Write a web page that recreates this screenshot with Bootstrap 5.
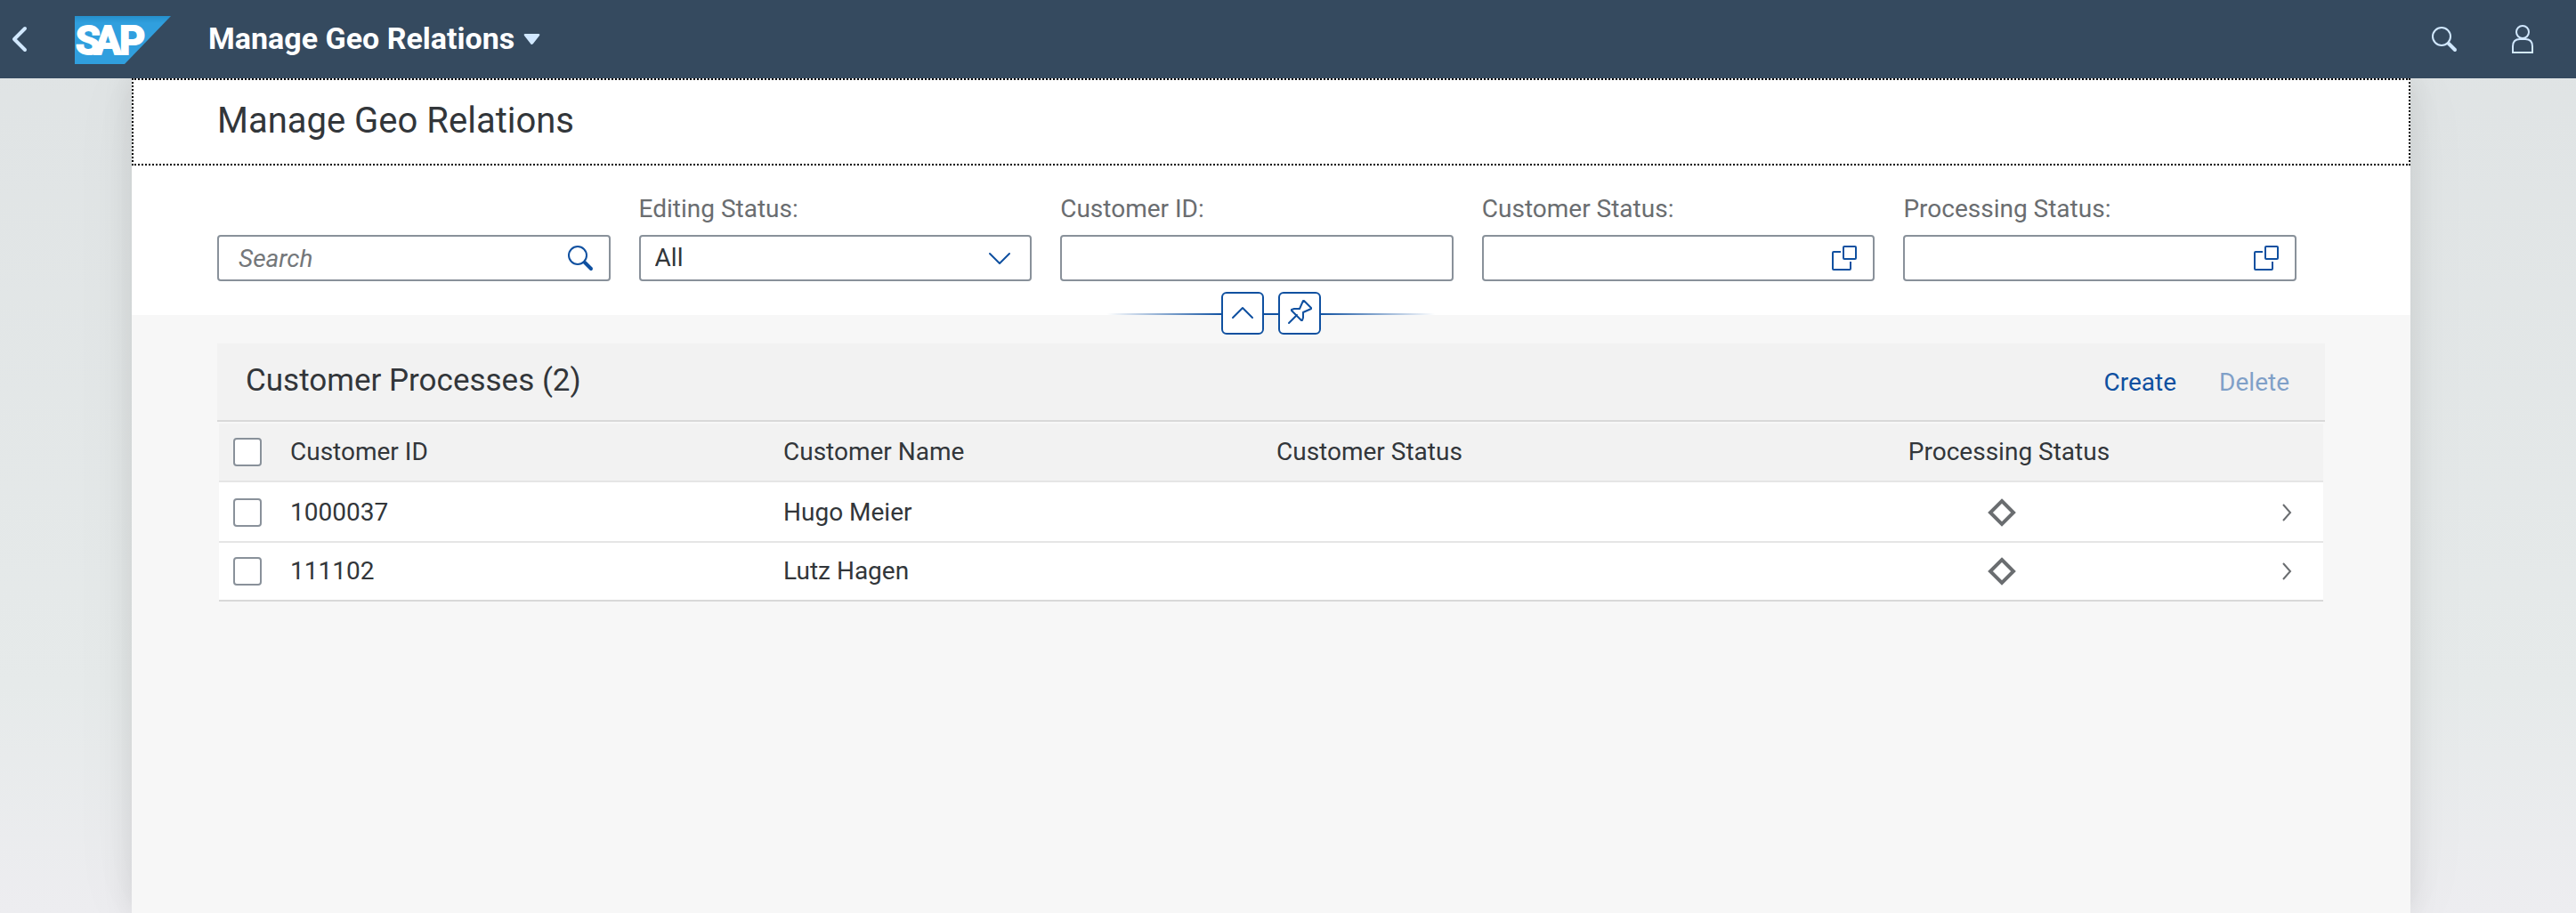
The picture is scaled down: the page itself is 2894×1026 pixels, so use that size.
<!DOCTYPE html>
<html lang="en">
<head>
<meta charset="utf-8">
<meta name="viewport" content="width=device-width, initial-scale=1">
<title>Manage Geo Relations</title>
<link href="https://cdn.jsdelivr.net/npm/bootstrap@5.3.0/dist/css/bootstrap.min.css" rel="stylesheet">
<style>
  :root { --brand: #0f50a0; --shell: #354a5f; --ink: #32363a; --muted-ink: #6a6d70; --field: #89919a; }
  body { font-family: Roboto, "Open Sans", sans-serif; font-size: 28px; line-height: 38px; color: var(--ink);
    background: linear-gradient(#dfe3e4, #e6eaea 75%, #ededf0) fixed; }
  svg { display: block; fill: none; flex-shrink: 0; }
  .shell-bar { background: var(--shell); height: 88px; color: #d1e8ff; position: relative; z-index: 2; padding: 0 44px 0 8px; }
  .shell-btn { border: 0; background: none; color: #d1e8ff; padding: 0; }
  .shell-logo { padding-top: 2px; }
  .shell-menu { margin-left: 40px; }
  .shell-title { font-size: 34px; font-weight: 700; color: #fff; line-height: 40px; padding-bottom: 2px; }
  .shell-tools { gap: 56px; }
  .page-area { padding-right: 38px; }
  .page { max-width: 2560px; background: #f7f7f7; box-shadow: 0 0 80px rgba(0,0,0,.04), 0 0 32px rgba(0,0,0,.1); }
  .page-head { border: 2px dotted #000; background: #fff; padding: 22px 94px 24px; }
  .page-title { font-size: 40px; line-height: 48px; font-weight: 400; margin: 0; }
  .filters { background: #fff; padding: 30px 96px 38px; }
  .filter-row { margin: 0; }
  .filter-row > .col { padding: 0 32px 0 0; }
  .filter-label { display: block; color: var(--muted-ink); margin-bottom: 10px; }
  .field-box { border: 2px solid var(--field); border-radius: 4px; height: 52px; background: #fff; overflow: hidden; color: var(--brand); }
  .field-box input, .field-box select { flex: 1 1 0; border: 0; background: transparent; color: var(--ink); outline: 0; padding: 0 16px; min-width: 0; height: 48px; appearance: none; }
  .field-box select { padding-right: 50px; margin-right: -50px; }
  .field-box input[type=search] { padding-left: 22px; }
  .field-box input::placeholder { color: #74777a; font-style: italic; opacity: 1; }
  .field-icon { border: 0; background: none; padding: 0 16px 0 0; color: var(--brand); }
  .pinline { height: 48px; margin: -26px auto -22px; width: 368px; position: relative;
    background: linear-gradient(90deg, transparent, var(--brand) 35%, var(--brand) 65%, transparent) center 24px / 100% 2px no-repeat; }
  .pin-btn { width: 48px; height: 48px; border: 2px solid var(--brand); border-radius: 6px; background: #fff; color: var(--brand); padding: 0; }
  .content { padding: 32px 96px 0; }
  .table-bar { background: #f2f2f2; border-bottom: 2px solid #d9d9d9; height: 88px; padding: 0 20px 0 32px; margin-bottom: 2px; }
  .table-title { font-size: 35px; line-height: 44px; font-weight: 400; margin: 0; padding-bottom: 2px; }
  .bar-btn { border: 0; background: none; color: var(--brand); padding: 2px 20px 0; }
  .bar-btn:disabled { opacity: .5; color: var(--brand); }
  .data-table { table-layout: fixed; width: 100%; border-collapse: separate; border-spacing: 0; }
  .data-wrap { padding: 0 2px; }
  .data-table th, .data-table td { padding: 0 16px; height: 66px; font-weight: 400; border-bottom: 2px solid #e5e5e5; vertical-align: middle; }
  .data-table thead th { background: #f2f2f2; }
  .data-table th.col-status { padding-left: 32px; }
  .data-table tbody tr:first-child td { height: 68px; padding-top: 2px; }
  .data-table tbody td { background: #fff; }
  .data-table tbody tr:last-child td { border-bottom-color: #d9d9d9; }
  .data-table .col-pick { width: 64px; }
  .data-table .col-go { width: 84px; }
  .pick { appearance: none; display: block; width: 32px; height: 32px; border: 2px solid var(--field); border-radius: 4px; background: #fff; margin: 0; }
</style>
<script src="https://cdn.jsdelivr.net/npm/bootstrap@5.3.0/dist/js/bootstrap.bundle.min.js"></script>
</head>
<body class="min-vh-100 d-flex flex-column">
<svg width="0" height="0" class="d-none" aria-hidden="true">
  <symbol id="i-search" viewBox="0 0 32 32"><g fill="none" stroke="currentColor"><circle cx="13" cy="13" r="10" stroke-width="2"/><path stroke-width="4" stroke-linecap="round" d="m21 21 7 7"/></g></symbol>
  <symbol id="i-help" viewBox="0 0 32 32"><g fill="none" stroke="currentColor" stroke-width="2"><rect x="15" y="3" width="14" height="14" rx="1"/><path d="M12 9H4q-1 0-1 1v18q0 1 1 1h18q1 0 1-1v-8"/></g></symbol>
  <symbol id="i-diamond" viewBox="0 0 32 32"><path fill="none" stroke="currentColor" stroke-width="4" d="M16 3 29 16 16 29 3 16z"/></symbol>
  <symbol id="i-go" viewBox="0 0 20 20"><path fill="none" stroke="currentColor" stroke-width="2" d="m7 1 8 9-8 9"/></symbol>
</svg>
<header class="shell-bar d-flex align-items-center flex-shrink-0">
  <button class="shell-btn" aria-label="Back"><svg width="28" height="32" viewBox="0 0 28 32" stroke="currentColor" stroke-width="4" stroke-linecap="round" stroke-linejoin="round"><path d="M20 4 8 16l12 12"/></svg></button>
  <a href="#" class="shell-logo ms-5" aria-label="SAP home">
    <svg width="110" height="54" viewBox="0 0 110 54">
      <defs><linearGradient id="logo-fill" x2="0" y2="1"><stop stop-color="#2590cc"/><stop offset=".15" stop-color="#309fde"/></linearGradient></defs>
      <path fill="url(#logo-fill)" d="M0 0h108L56 54H0z"/>
      <text y="43" x="1 22 50" font-family="Roboto, sans-serif" font-weight="700" font-size="45" fill="#fff" stroke="#fff" stroke-width="2">SAP</text>
    </svg>
  </a>
  <button class="shell-btn shell-menu d-flex align-items-center gap-2"><span class="shell-title">Manage Geo Relations</span>
    <svg width="24" height="20" viewBox="0 0 24 20"><path fill="currentColor" d="M4 4h15q2 0 1 2l-7 9q-2 2-3 0L3 6q-1-2 1-2z"/></svg></button>
  <div class="shell-tools ms-auto d-flex align-items-center">
    <button class="shell-btn" aria-label="Search"><svg width="32" height="32"><use href="#i-search"/></svg></button>
    <button class="shell-btn" aria-label="Profile"><svg width="32" height="32" viewBox="0 0 32 32" stroke="currentColor" stroke-width="2"><circle cx="16" cy="8" r="7"/><path d="M5 31v-7q0-8 8-8h6q8 0 8 8v7z"/></svg></button>
  </div>
</header>
<div class="page-area flex-grow-1 d-flex">
<main class="page w-100 mx-auto">
  <div class="page-head"><h1 class="page-title">Manage Geo Relations</h1></div>
  <form class="filters">
    <div class="row row-cols-5 filter-row align-items-end">
      <div class="col">
        <div class="field-box d-flex align-items-center"><input type="search" placeholder="Search" aria-label="Search"><button type="button" class="field-icon" aria-label="Run search"><svg width="32" height="32"><use href="#i-search"/></svg></button></div>
      </div>
      <div class="col">
        <label class="filter-label" for="f-edit">Editing Status:</label>
        <div class="field-box d-flex align-items-center"><select id="f-edit"><option>All</option></select><span class="field-icon pe-none"><svg width="36" height="32" viewBox="0 0 36 32" stroke="currentColor" stroke-width="2" stroke-linecap="round" stroke-linejoin="round"><path d="m7 11 11 11 11-11"/></svg></span></div>
      </div>
      <div class="col">
        <label class="filter-label" for="f-id">Customer ID:</label>
        <div class="field-box d-flex align-items-center"><input type="text" id="f-id"></div>
      </div>
      <div class="col">
        <label class="filter-label" for="f-cust">Customer Status:</label>
        <div class="field-box d-flex align-items-center"><input type="text" id="f-cust"><button type="button" class="field-icon" aria-label="Choose customer status"><svg width="32" height="32"><use href="#i-help"/></svg></button></div>
      </div>
      <div class="col">
        <label class="filter-label" for="f-proc">Processing Status:</label>
        <div class="field-box d-flex align-items-center"><input type="text" id="f-proc"><button type="button" class="field-icon" aria-label="Choose processing status"><svg width="32" height="32"><use href="#i-help"/></svg></button></div>
      </div>
    </div>
  </form>
  <div class="pinline d-flex justify-content-center gap-3">
    <button class="pin-btn d-flex align-items-center justify-content-center" aria-label="Collapse header"><svg width="32" height="32" viewBox="0 0 32 32" stroke="currentColor" stroke-width="2" stroke-linecap="round" stroke-linejoin="round"><path d="M5 21 16 10l11 11"/></svg></button>
    <button class="pin-btn d-flex align-items-center justify-content-center" aria-label="Pin header"><svg width="32" height="32" viewBox="0 0 32 32" stroke="currentColor" stroke-width="2" stroke-linecap="round" stroke-linejoin="round"><path d="M4 27 13 18M7 12l3-1 6 0 4-9 1 0 8 8 0 1-9 4 0 6-1 3-1 0L7 13z"/></svg></button>
  </div>
  <section class="content">
    <div class="table-bar d-flex align-items-center">
      <h2 class="table-title">Customer Processes (2)</h2>
      <div class="ms-auto d-flex gap-2">
        <button class="bar-btn">Create</button>
        <button class="bar-btn" disabled>Delete</button>
      </div>
    </div>
    <div class="data-wrap">
      <table class="data-table">
        <thead>
          <tr>
            <th class="col-pick"><input type="checkbox" class="pick" aria-label="Select all"></th>
            <th>Customer ID</th><th>Customer Name</th><th>Customer Status</th>
            <th class="col-status text-center">Processing Status</th>
            <th class="col-go"></th>
          </tr>
        </thead>
        <tbody>
          <tr>
            <td><input type="checkbox" class="pick" aria-label="Select 1000037"></td>
            <td>1000037</td><td>Hugo Meier</td><td></td>
            <td><svg class="mx-auto" width="32" height="32" color="#6a6d70"><use href="#i-diamond"/></svg></td>
            <td><svg class="ms-auto me-3" width="20" height="20" color="#6a6d70"><use href="#i-go"/></svg></td>
          </tr>
          <tr>
            <td><input type="checkbox" class="pick" aria-label="Select 111102"></td>
            <td>111102</td><td>Lutz Hagen</td><td></td>
            <td><svg class="mx-auto" width="32" height="32" color="#6a6d70"><use href="#i-diamond"/></svg></td>
            <td><svg class="ms-auto me-3" width="20" height="20" color="#6a6d70"><use href="#i-go"/></svg></td>
          </tr>
        </tbody>
      </table>
    </div>
  </section>
</main>
</div>
</body>
</html>
